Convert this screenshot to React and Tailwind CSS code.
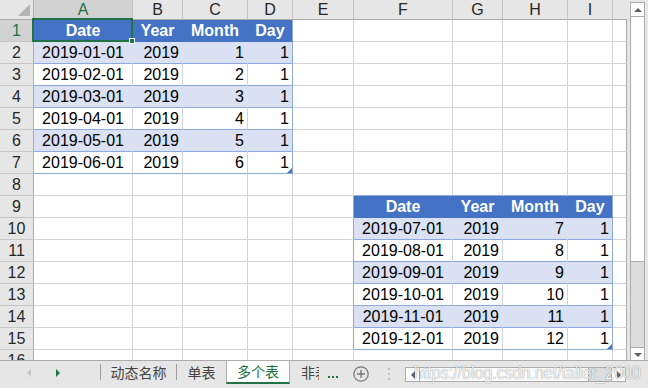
import React from 'react';

// Excel-like sheet: two formatted tables on one worksheet

const COLS = ['', 'A', 'B', 'C', 'D', 'E', 'F', 'G', 'H', 'I', ''];
const HEAD = ['Date', 'Year', 'Month', 'Day'];
const ROWS = 17; // header row + rows 1..16

const tables = [
  { top: 1, left: 1, months: [1, 2, 3, 4, 5, 6] },
  { top: 9, left: 6, months: [7, 8, 9, 10, 11, 12] },
];

const tableAt = (r, c) => {
  for (const t of tables) {
    if (r >= t.top && r <= t.top + 6 && c >= t.left && c <= t.left + 3) {
      return { t, tr: r - t.top, tc: c - t.left };
    }
  }
  return null;
};

const Corner = () => (
  <div className="relative bg-[#e6e6e6] border-r border-b border-r-[#ababab] border-b-[#ababab]">
    <svg className="absolute right-[3px] bottom-[3px]" width="12" height="12" viewBox="0 0 12 12">
      <polygon points="12,0 12,12 0,12" fill="#b4b4b4" />
    </svg>
  </div>
);

const ColHead = ({ c }) => {
  if (c === 10) {
    return <div className="bg-[#e6e6e6] border-b border-b-[#ababab]" />;
  }
  const active = c === 1;
  return (
    <div
      className={`flex items-center justify-center text-[16px] border-r border-b border-r-[#c6c6c6] ${
        active ? 'bg-[#d2d2d2] text-[#217346] border-b-[#217346]' : 'bg-[#e6e6e6] text-[#262626] border-b-[#ababab]'
      }`}
    >
      {COLS[c]}
    </div>
  );
};

const RowHead = ({ r }) => {
  const active = r === 1;
  return (
    <div
      className={`flex items-center justify-center text-[16px] border-r border-b border-b-[#c6c6c6] ${
        active ? 'bg-[#d2d2d2] text-[#217346] border-r-[#217346]' : 'bg-[#e6e6e6] text-[#262626] border-r-[#ababab]'
      }`}
    >
      {r}
    </div>
  );
};

const ResizeMark = () => (
  <svg className="absolute right-0 bottom-0" width="5" height="5" viewBox="0 0 5 5">
    <polygon points="5,0 5,5 0,5" fill="#4472c4" />
  </svg>
);

const Cell = ({ r, c }) => {
  const hit = tableAt(r, c);

  if (!hit) {
    const above = tables.some((t) => r === t.top - 1 && c >= t.left && c <= t.left + 3);
    const leftOf = tables.some((t) => c === t.left - 1 && r >= t.top && r <= t.top + 6);
    const rClass = c === 10 ? 'border-r-[#ababab]' : leftOf ? 'border-r-[#8ea9db]' : 'border-r-[#d4d4d4]';
    const bClass = above ? 'border-b-[#8ea9db]' : 'border-b-[#d4d4d4]';
    return <div className={`bg-white border-r border-b ${rClass} ${bClass}`} />;
  }

  const { t, tr, tc } = hit;
  const last = tc === 3;

  if (tr === 0) {
    const selected = r === 1 && c === 1;
    return (
      <div
        className={`relative flex items-center justify-center bg-[#4472c4] text-white font-bold text-[16px] border-r border-b border-b-[#4472c4] ${
          last ? 'border-r-[#8ea9db]' : 'border-r-[#4472c4]'
        } ${selected ? 'z-10' : ''}`}
      >
        {HEAD[tc]}
        {selected && (
          <>
            <div className="absolute -left-[2px] -top-[2px] -right-[1px] -bottom-[1px] border-2 border-[#217346]" />
            <div className="absolute -right-[3px] -bottom-[3px] w-[6px] h-[6px] bg-[#217346] border border-white" />
          </>
        )}
      </div>
    );
  }

  const m = t.months[tr - 1];
  const banded = tr % 2 === 1;
  const text = tc === 0 ? `2019-${String(m).padStart(2, '0')}-01` : tc === 1 ? '2019' : tc === 2 ? m : 1;
  const rClass = last ? 'border-r-[#8ea9db]' : banded ? 'border-r-[#d9e1f2]' : 'border-r-[#d4d4d4]';

  return (
    <div
      className={`relative flex items-center whitespace-nowrap text-[16px] text-black border-r border-b border-b-[#8ea9db] ${rClass} ${
        banded ? 'bg-[#d9e1f2]' : 'bg-white'
      } ${tc === 0 ? 'justify-center' : 'justify-end pr-[3px]'}`}
    >
      {text}
      {last && tr === 6 && <ResizeMark />}
    </div>
  );
};

const Sheet = () => {
  const cells = [];
  for (let r = 0; r < ROWS; r++) {
    for (let c = 0; c < COLS.length; c++) {
      const key = `${r}-${c}`;
      if (r === 0 && c === 0) cells.push(<Corner key={key} />);
      else if (r === 0) cells.push(<ColHead key={key} c={c} />);
      else if (c === 0) cells.push(<RowHead key={key} r={r} />);
      else cells.push(<Cell key={key} r={r} c={c} />);
    }
  }
  return (
    <div className="w-[627px] h-[360px] overflow-hidden">
      <div className="grid grid-cols-[34px_99px_50px_65px_45px_61px_99px_50px_65px_45px_14px] grid-rows-[20px_repeat(16,22px)]">
        {cells}
      </div>
    </div>
  );
};

const VScroll = () => (
  <div className="w-[21px] h-[360px] overflow-hidden bg-[#e6e6e6] pl-[3px] pt-[2px]">
    <div className="flex flex-col w-[15px]">
      <div className="h-[15px] flex items-center justify-center bg-white border border-[#ababab]">
        <svg width="8" height="4" viewBox="0 0 8 4"><polygon points="4,0 8,4 0,4" fill="#606060" /></svg>
      </div>
      <div className="h-[245px] bg-white border-x border-b border-[#ababab]" />
      <div className="h-[85px] bg-[#dcdcdc] border-x border-[#ababab]" />
      <div className="h-[15px] flex items-center justify-center bg-white border border-[#ababab]">
        <svg width="8" height="4" viewBox="0 0 8 4"><polygon points="0,0 8,0 4,4" fill="#606060" /></svg>
      </div>
    </div>
  </div>
);

const TabBar = () => (
  <div className="flex items-start h-[28px] bg-[#e6e6e6] border-t border-[#ababab] text-[14px] text-[#444] font-['Noto_Sans_CJK_SC',sans-serif]">
    <div className="w-[100px] h-[23px] flex items-center">
      <svg className="ml-[27px]" width="4" height="8" viewBox="0 0 4 8"><polygon points="4,0 4,8 0,4" fill="#c4c4c4" /></svg>
      <svg className="ml-[25px]" width="4" height="8" viewBox="0 0 4 8"><polygon points="0,0 4,4 0,8" fill="#217346" /></svg>
    </div>
    <div className="w-px h-[16px] mt-[3px] bg-[#9b9b9b]" />
    <div className="w-[75px] h-[23px] flex items-center justify-center">动态名称</div>
    <div className="w-px h-[16px] mt-[3px] bg-[#9b9b9b]" />
    <div className="w-[49px] h-[23px] flex items-center justify-center">单表</div>
    <div className="w-[64px] h-[23px] flex items-center justify-center bg-white border-x border-x-[#ababab] border-b-2 border-b-[#217346] text-[#217346]">
      多个表
    </div>
    <div className="w-[29px] h-[23px] overflow-hidden flex items-center pl-[11px] whitespace-nowrap">非表</div>
    <div className="ml-[9px] mt-[15px] flex gap-[2px]">
      <span className="w-[2px] h-[2px] bg-[#217346]" />
      <span className="w-[2px] h-[2px] bg-[#217346]" />
      <span className="w-[2px] h-[2px] bg-[#217346]" />
    </div>
    <svg className="ml-[15px] mt-[5px]" width="16" height="16" viewBox="0 0 16 16">
      <circle cx="8" cy="8" r="7.2" fill="none" stroke="#777" strokeWidth="1.2" />
      <path d="M8 4v8M4 8h8" stroke="#777" strokeWidth="1.4" />
    </svg>
    <div className="ml-[19px] mt-[7px] flex flex-col gap-[3px]">
      <span className="w-[2px] h-[2px] bg-[#c0c0c0]" />
      <span className="w-[2px] h-[2px] bg-[#c0c0c0]" />
      <span className="w-[2px] h-[2px] bg-[#c0c0c0]" />
    </div>
    <div className="ml-[15px] mt-[6px] flex h-[15px] w-[221px]">
      <div className="w-[15px] flex items-center justify-center bg-white border border-[#ababab]">
        <svg width="4" height="8" viewBox="0 0 4 8"><polygon points="4,0 4,8 0,4" fill="#606060" /></svg>
      </div>
      <div className="w-[169px] bg-white border-y border-r border-[#ababab]" />
      <div className="flex-1 bg-[#dcdcdc] border-y border-[#ababab]" />
      <div className="w-[15px] flex items-center justify-center bg-white border border-[#ababab]">
        <svg width="4" height="8" viewBox="0 0 4 8"><polygon points="0,0 4,4 0,8" fill="#606060" /></svg>
      </div>
    </div>
  </div>
);

export default function App() {
  return (
    <div className="relative w-[648px] h-[388px] overflow-hidden bg-[#e6e6e6] font-['Liberation_Sans',Arial,sans-serif]">
      <div className="flex">
        <Sheet />
        <VScroll />
      </div>
      <TabBar />
      <div className="absolute left-[414px] top-[359px] origin-top-left scale-y-[1.2] text-[16px] text-white/90 pointer-events-none whitespace-nowrap [text-shadow:0_0_1px_rgba(0,0,0,0.6)]">
        https://blog.csdn.net/taller_2000
      </div>
    </div>
  );
}
